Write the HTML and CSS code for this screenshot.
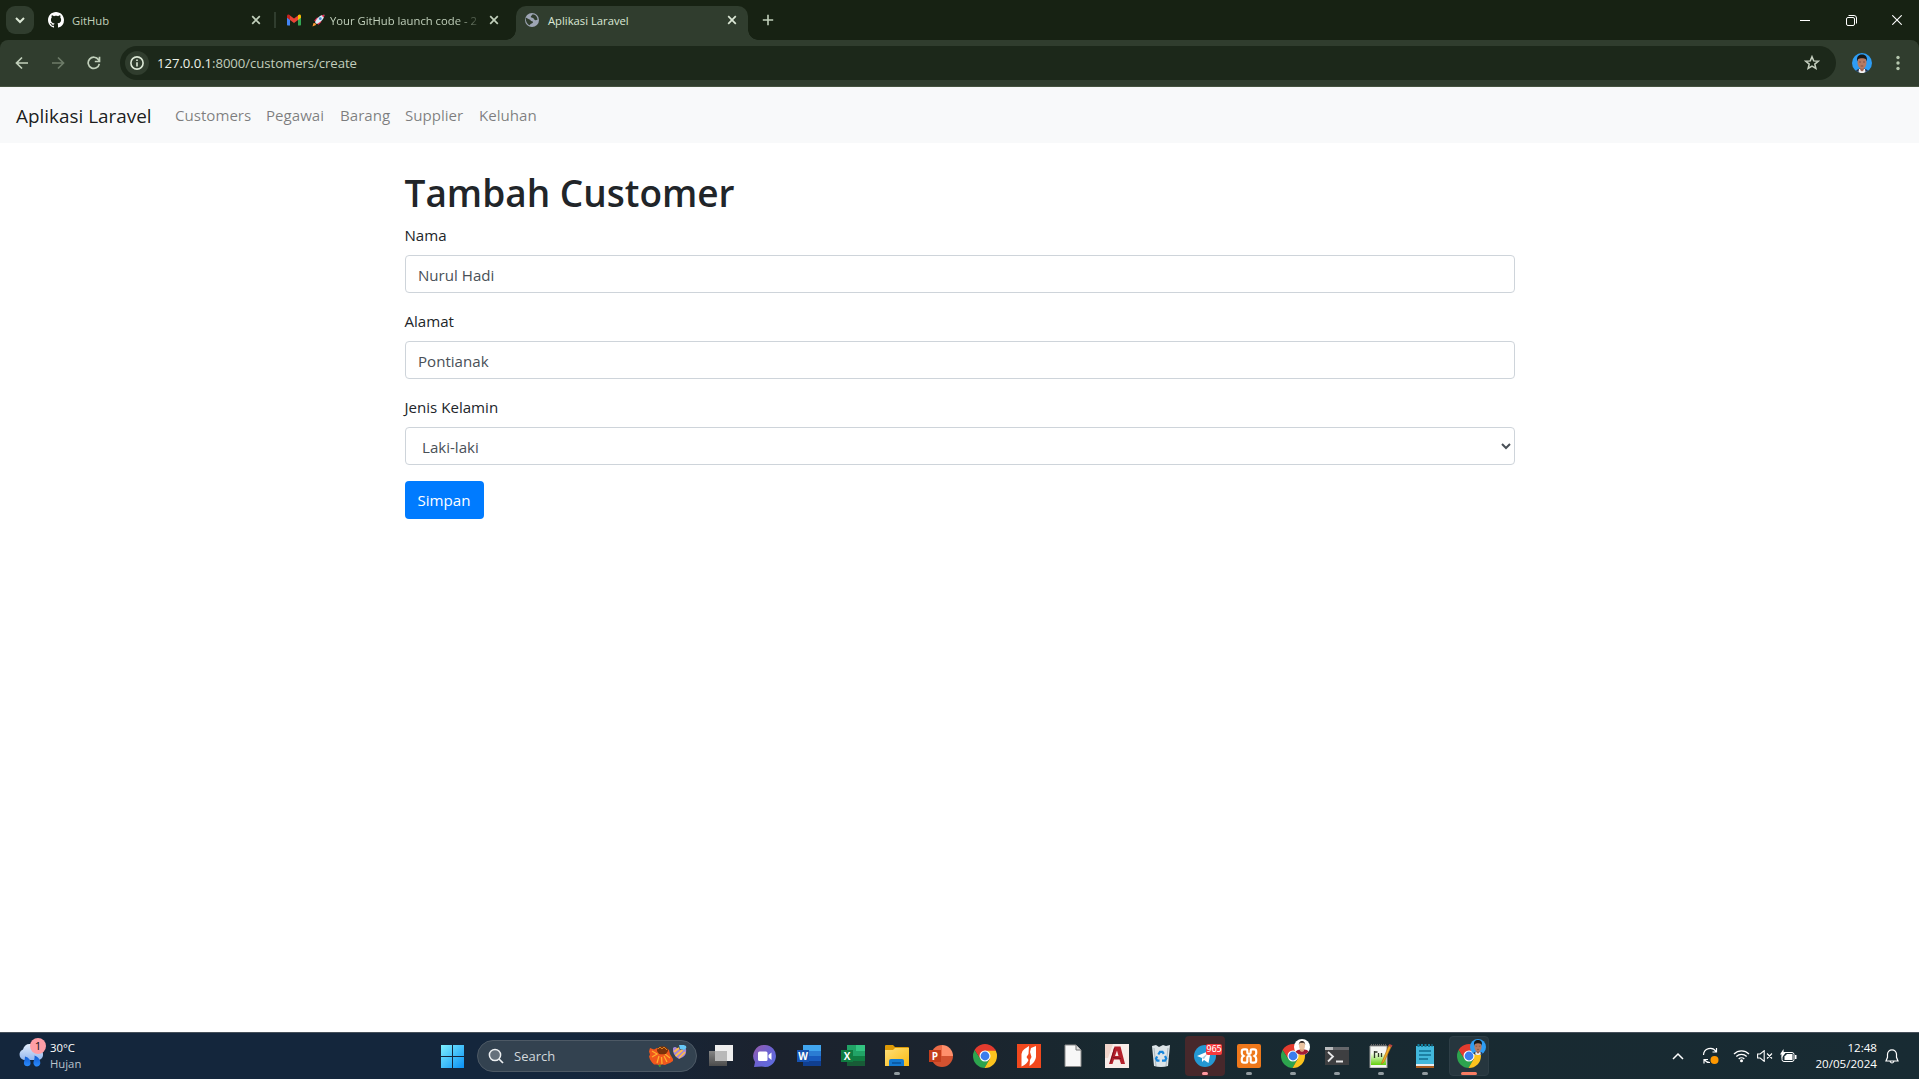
FILE: index.html
```html
<!DOCTYPE html>
<html lang="id">
<head>
<meta charset="utf-8">
<title>Aplikasi Laravel</title>
<link rel="stylesheet" href="styles.css">
</head>
<body>
<svg class="defs" width="0" height="0" aria-hidden="true">
  <defs>
    <linearGradient id="win" x1="0" y1="0" x2="1" y2="1"><stop offset="0" stop-color="#7df0ff"/><stop offset="1" stop-color="#0a90f5"/></linearGradient>
    <linearGradient id="cloud" x1="0" y1="0" x2="0" y2="1"><stop offset="0" stop-color="#e3edfb"/><stop offset="1" stop-color="#94b7ee"/></linearGradient>
    <linearGradient id="drop" x1="0" y1="0" x2="0" y2="1"><stop offset="0" stop-color="#1259d0"/><stop offset="1" stop-color="#2a8cff"/></linearGradient>
    <linearGradient id="chat" x1="0" y1="0" x2="1" y2="1"><stop offset="0" stop-color="#9a5aa8"/><stop offset=".5" stop-color="#6b62d2"/><stop offset="1" stop-color="#5b6fe0"/></linearGradient>
    <linearGradient id="folder" x1="0" y1="0" x2="1" y2="1"><stop offset="0" stop-color="#ffe07a"/><stop offset="1" stop-color="#fbb910"/></linearGradient>
    <linearGradient id="npp" x1="0" y1="0" x2="0" y2="1"><stop offset="0" stop-color="#f8fff0"/><stop offset="1" stop-color="#63d00c"/></linearGradient>
    <linearGradient id="grey" x1="0" y1="0" x2="0" y2="1"><stop offset="0" stop-color="#858585"/><stop offset="1" stop-color="#4c4c4c"/></linearGradient>
    <clipPath id="round"><circle cx="12" cy="12" r="12"/></clipPath>
    <symbol id="chrome" viewBox="0 0 24 24">
      <g clip-path="url(#round)">
        <path fill="#e33b2e" d="M0 0h24v7H12L7 14.500 1.600 6z"/>
        <path fill="#2da44e" d="M1.600 6 7.200 14.800l4.800 2.500 4-.8L11.500 24H0V6z"/>
        <path fill="#fcc31e" d="M12 6.700h12V24H11.500l5.200-9z"/>
      </g>
      <circle cx="12" cy="12" r="5.500" fill="#fff"/><circle cx="12" cy="12" r="4.400" fill="#3b7ded"/>
    </symbol>
    <symbol id="close" viewBox="0 0 10 10"><path d="M1.200 1.200l7.600 7.600M8.800 1.200L1.200 8.800" fill="none" stroke="currentColor" stroke-width="1.700"/></symbol>
    <symbol id="person" viewBox="0 0 20 20">
      <circle cx="10" cy="10" r="10" fill="#2e9df4"/>
      <path d="M4 17.800C5 16 7.500 15.500 10 15.500s5 .5 6 2.300A10 10 0 0 1 10 20a10 10 0 0 1-6-2.200z" fill="#26304a"/>
      <path d="M7 16h6l.5 3-2 1h-3l-2-1z" fill="#f4f2f2"/>
      <path d="M8.200 13h3.600v4L10 18.500 8.200 17z" fill="#9a6250"/>
      <ellipse cx="10" cy="9.500" rx="4.500" ry="6.300" fill="#b67a62"/>
      <path d="M5.200 8.500C4.300 3.500 6.500 1.400 10 1.400s5.700 2.100 4.800 7.100L14 6.200C12 5 8 5 6 6.200z" fill="#171717"/>
      <path d="M7 9h2M11 9h2M8.700 13h2.600" stroke="#6a4236" stroke-width=".7"/>
    </symbol>
  </defs>
</svg>

<header class="browser">
  <div class="tabstrip">
    <button class="tab-search" aria-label="Search tabs"><svg width="10" height="7" viewBox="0 0 10 7"><path d="M1 1l4 4 4-4" fill="none" stroke="currentColor" stroke-width="2"/></svg></button>
    <div class="tab tab-github">
      <svg class="favicon" width="16" height="16" viewBox="0 0 16 16"><path fill="#fff" d="M8 0C3.580 0 0 3.580 0 8c0 3.540 2.290 6.530 5.470 7.590.4.070.55-.17.55-.38 0-.19-.01-.82-.01-1.490-2.010.37-2.530-.49-2.690-.94-.09-.23-.48-.94-.82-1.130-.28-.15-.68-.52-.01-.53.63-.01 1.080.58 1.230.82.72 1.210 1.870.87 2.330.66.070-.52.28-.87.51-1.070-1.780-.2-3.640-.89-3.640-3.950 0-.87.31-1.590.82-2.150-.08-.2-.36-1.020.08-2.120 0 0 .67-.21 2.200.82.64-.18 1.320-.27 2-.27s1.360.09 2 .27c1.530-1.040 2.200-.82 2.200-.82.44 1.100.16 1.920.08 2.120.51.56.82 1.270.82 2.150 0 3.070-1.870 3.750-3.650 3.950.29.25.54.73.54 1.480 0 1.070-.01 1.930-.01 2.200 0 .21.15.46.55.38A8.010 8.010 0 0 0 16 8c0-4.420-3.580-8-8-8z"/></svg>
      <span class="tab-title">GitHub</span>
      <svg class="tab-close" width="10" height="10"><use href="#close"/></svg>
    </div>
    <div class="tab tab-mail">
      <svg class="favicon" width="16" height="16" viewBox="0 0 16 16"><path fill="#4285f4" d="M1 5v7.500c0 .6.400 1 1 1h2V7z"/><path fill="#34a853" d="M15 5v7.500c0 .6-.4 1-1 1h-2V7z"/><path fill="#ea4335" d="M4 3.600l4 3 4-3V8l-4 3-4-3z"/><path fill="#c5221f" d="M1 4.200C1 2.500 2.700 2 4 3.300V8L1 5.800z"/><path fill="#fbbc04" d="M15 4.200c0-1.700-1.700-2.200-3-.9V8l3-2.200z"/></svg>
      <svg class="rocket" width="13" height="13" viewBox="0 0 13 13"><path d="M2.200 6.500L5 3.600l2.500.7-3.700 4zM6.500 10.800l2.900-2.800-.6-2.500-3.900 3.800z" fill="#e4264e"/><path d="M3 8.300C5 4 8 .7 12.300.7c0 4.300-3.400 7.300-7.600 9.300z" fill="#dcebf4"/><path d="M9.500 1.400c.9-.5 1.800-.7 2.800-.7 0 1-.2 2-.6 2.900z" fill="#e4264e"/><circle cx="8.300" cy="4.700" r="1.400" fill="#438bd0"/><path d="M.5 12.500l1-3.500 2 .2.500 1.900z" fill="#ff9c32"/></svg>
      <span class="tab-title fade">Your GitHub launch code - 2</span>
      <svg class="tab-close" width="10" height="10"><use href="#close"/></svg>
    </div>
    <div class="tab tab-active">
      <svg class="favicon" width="14" height="14" viewBox="0 0 14 14"><circle cx="7" cy="7" r="7" fill="#9da5b4"/><path d="M.8 4.700C2 5 3 6 4.500 6.500c1.200.3 1 1.500 2.500 1.700 1.200.2 1.300 1 .5 1.800-.8.800-2.500.7-2.800 2.300C2.500 11.500.5 8.500.8 4.700zM7.500 1.300C7.500 2.500 5.800 2.500 5.800 3.700S7 4.500 8 5c1.200.6 1 2 2.300 2.200.8.100 1.400-.4 2.200-.4C12.500 4 10.500 1.500 7.500 1.300z" fill="#303d2e"/></svg>
      <span class="tab-title">Aplikasi Laravel</span>
      <svg class="tab-close" width="10" height="10"><use href="#close"/></svg>
    </div>
    <button class="new-tab" aria-label="New tab"><svg width="12" height="12" viewBox="0 0 12 12"><path d="M6 .8v10.400M.8 6h10.400" stroke="currentColor" stroke-width="1.600"/></svg></button>
    <div class="window-controls">
      <span><svg width="10" height="10"><path d="M0 5.500h10" stroke="#fff"/></svg></span>
      <span><svg width="11" height="11" viewBox="0 0 11 11" fill="none" stroke="#fff"><rect x=".5" y="2.500" width="8" height="8" rx="1.500"/><path d="M2.500.5H8A2.500 2.500 0 0 1 10.500 3v5.500"/></svg></span>
      <span><svg width="10" height="10" viewBox="0 0 10 10"><path d="M.3.3l9.400 9.400M9.700.3L.3 9.700" stroke="#fff" stroke-width="1.100"/></svg></span>
    </div>
  </div>
  <div class="toolbar">
    <span class="nav-icon"><svg width="14" height="14" viewBox="0 0 14 14" fill="none" stroke="currentColor" stroke-width="1.700"><path d="M13 7H2M7 1.500L1.500 7 7 12.500"/></svg></span>
    <span class="nav-icon disabled"><svg width="14" height="14" viewBox="0 0 14 14" fill="none" stroke="currentColor" stroke-width="1.700"><path d="M1 7h11M7 1.500L12.500 7 7 12.500"/></svg></span>
    <span class="nav-icon"><svg width="14" height="14" viewBox="0 0 14 14" fill="none" stroke="currentColor" stroke-width="1.700"><path d="M12.300 7.800A5.600 5.600 0 1 1 11.500 3.800L12.500 5M12.500.8V5.500H7.800"/></svg></span>
    <div class="omnibox">
      <span class="site-info"><svg width="14" height="14" viewBox="0 0 14 14"><circle cx="7" cy="7" r="6.100" fill="none" stroke="currentColor" stroke-width="1.600"/><path d="M7 6.200v4.200M7 3.500v1.600" stroke="currentColor" stroke-width="1.600"/></svg></span>
      <span class="url"><b>127.0.0.1</b>:8000/customers/create</span>
      <svg class="star" width="16" height="16" viewBox="0 0 16 16"><path d="M8 1.700l1.700 4.200 4.500.3-3.400 2.900 1.100 4.400L8 11.100l-3.900 2.400 1.100-4.400L1.800 6.200l4.500-.3z" fill="none" stroke="currentColor" stroke-width="1.500"/></svg>
    </div>
    <svg class="avatar" width="20" height="20"><use href="#person"/></svg>
    <svg class="kebab" width="4" height="16" viewBox="0 0 4 16" fill="currentColor"><circle cx="2" cy="2.500" r="1.700"/><circle cx="2" cy="8" r="1.700"/><circle cx="2" cy="13.500" r="1.700"/></svg>
  </div>
</header>

<nav class="navbar">
  <a class="brand">Aplikasi Laravel</a>
  <ul class="menu"><li class="m-customers">Customers</li><li class="m-pegawai">Pegawai</li><li class="m-barang">Barang</li><li class="m-supplier">Supplier</li><li>Keluhan</li></ul>
</nav>

<main class="container">
  <h1>Tambah Customer</h1>
  <form>
    <div class="form-group"><label for="nama">Nama</label><input class="form-control" id="nama" value="Nurul Hadi"></div>
    <div class="form-group"><label for="alamat">Alamat</label><input class="form-control" id="alamat" value="Pontianak"></div>
    <div class="form-group"><label for="jk">Jenis Kelamin</label><select class="form-control" id="jk"><option>Laki-laki</option></select></div>
    <button class="btn" type="button">Simpan</button>
  </form>
</main>

<footer class="taskbar">
  <div class="weather">
    <svg width="28" height="30" viewBox="0 0 28 30"><path d="M6 22a5.500 5.500 0 0 1-1-10.500C6 7 10 5 14 6.500c4-1 8 1 9 5.500 3 2 3 9-2 10z" fill="url(#cloud)"/><path d="M7 18.500c4 1 6 4 5.500 7.500-1 3-5.500 3-6.500 0-.5-2.500 1-4 1-7.500zM16.500 17.500c4.500 1.500 6 5 5.800 8-.8 4-5.500 4-6.700.5-.6-3 1.400-4.500.9-8.500z" fill="url(#drop)"/><circle cx="20" cy="8" r="8" fill="#ff9ea6"/><text x="20" y="12" text-anchor="middle" class="badge-text">1</text></svg>
    <div class="weather-text"><span>30°C</span><span class="muted">Hujan</span></div>
  </div>
  <span class="start"><svg width="23" height="23" viewBox="0 0 23 23"><path fill="url(#win)" d="M0 0h11v11H0zM12 0h11v11H12zM0 12h11v11H0zM12 12h11v11H12z"/></svg></span>
  <div class="search">
    <svg width="16" height="16" viewBox="0 0 16 16"><circle cx="7" cy="7" r="5.600" fill="#66717c" stroke="#eceff1" stroke-width="1.500"/><path d="M11 11l4 4" stroke="#eceff1" stroke-width="1.700"/></svg>
    <span>Search</span>
    <svg class="flowers" width="38" height="22" viewBox="0 0 38 22"><path d="M1 3l4 1.500L8 3h9l3 2 1 4 3 5 0 2-3 2-3 1-2 1-3-.5-2 1-3-1-3 0-2-2-2-3-1-3 1-2-1-3z" fill="#f0571d"/><path d="M3 6l5 3-5 3M8 18l2-7M13 19l-.5-7M18 17l-3-6M21 13l-5-4" stroke="#ffae2c" stroke-width="1.300" fill="none"/><path d="M10 20.500l1-1v2.500z" fill="#3e9a34" stroke="#3e9a34"/><ellipse cx="13.500" cy="5.300" rx="5.500" ry="4" fill="#79320b"/><path d="M9 4l2-2 2 2 2-2 3 3" stroke="#d7801c" fill="none"/><path d="M24 3q2-2 4 0l4 2 5-1q1 5-3 8l-4 2q-7-4-6-11z" fill="#a886d5"/><path d="M30 0q4-1 7 1 1 3-2 4l-4-1z" fill="#67c8f7"/><path d="M25 7l5-4M26.500 11l7-6M30 13l6-6" stroke="#ffbf45" stroke-width="1.700"/></svg>
  </div>
  <div class="apps">
    <span class="app"><svg width="24" height="24" viewBox="0 0 24 24"><path fill="url(#grey)" d="M0 7h18v15H0z"/><path fill="#eee" d="M6 1h18v16H6z"/><path fill="#b9b9b9" d="M6 7h12v10H6z"/></svg></span>
    <span class="app"><svg width="24" height="24" viewBox="0 0 24 24"><path d="M12 1a11 11 0 1 1-3 21.600L1 23l1-5A11 11 0 0 1 12 1z" fill="url(#chat)"/><rect x="5" y="7.500" width="9.500" height="9.500" rx="1.500" fill="#fff"/><path d="M15.500 11l3-2.500v7.500l-3-2.500z" fill="#fff"/></svg></span>
    <span class="app"><svg width="24" height="24" viewBox="0 0 24 24"><path fill="#41a5ee" d="M6 1h18v6H6z"/><path fill="#2b7cd3" d="M6 7h18v5H6z"/><path fill="#185abd" d="M6 12h18v5H6z"/><path fill="#103f91" d="M6 17h18v5H6z"/><path fill="#1752b0" d="M0 6h12v12H0z"/><text x="6" y="15.600" text-anchor="middle" class="office">W</text></svg></span>
    <span class="app"><svg width="24" height="24" viewBox="0 0 24 24"><path fill="#21a366" d="M6 1h18v11H6z"/><path fill="#33c481" d="M15 1h9v6h-9z"/><path fill="#107c41" d="M6 12h18v5H6z"/><path fill="#185c37" d="M6 17h18v5H6z"/><path fill="#107c41" d="M0 6h12v12H0z"/><text x="6" y="15.600" text-anchor="middle" class="office">X</text></svg></span>
    <span class="app open"><svg width="24" height="24" viewBox="0 0 24 24"><path fill="#dd9a06" d="M0 2q0-1 1-1h7l2 2h13q1 0 1 1v6H0z"/><path fill="url(#folder)" d="M0 6h8l2-2h14v18H0z"/><path fill="#147ad0" d="M4 17q0-2 2-2h11q2 0 2 2v5H4z"/><path fill="#0b5ba6" d="M7 18h9v2H7z"/></svg></span>
    <span class="app"><svg width="24" height="24" viewBox="0 0 24 24"><path fill="#ed6c47" d="M13 1v11H2A11 11 0 0 1 13 1z"/><path fill="#ff8f6b" d="M13 1a11 11 0 0 1 11 11H13z"/><path fill="#d35230" d="M2 12h22a11 11 0 0 1-22 0z"/><path fill="#c43e1c" d="M0 6h12v12H0z"/><text x="6" y="15.600" text-anchor="middle" class="office">P</text></svg></span>
    <span class="app"><svg width="24" height="24"><use href="#chrome"/></svg></span>
    <span class="app"><svg width="24" height="24" viewBox="0 0 24 24"><path fill="#f1481d" d="M0 0h24v24H0z"/><path d="M4.500 19V10q0-3 3-5l4.500-3-.5 8-2 3 2 3q-1.500 4-7 6.500zM13 8l1-4 5-2v11q-.5 5-6.500 9l.5-6 1.500-3z" fill="#fff"/></svg></span>
    <span class="app"><svg width="24" height="24" viewBox="0 0 24 24"><path d="M4 1h11l5 5v16.500H4z" fill="#f7f7f7" stroke="#8c8c8c"/><path d="M15 1v5h5" fill="#ddd" stroke="#777"/></svg></span>
    <span class="app"><svg width="24" height="24" viewBox="0 0 24 24"><path fill="#f8ece8" d="M0 0h24v24H0z"/><path fill="#f0d4ca" d="M0 0h8L3 14H0z"/><path fill="#b41f2a" fill-rule="evenodd" d="M4 20L9.500 2.500h6L20 20h-4l-1.500-4.500H9L7.500 20zM10 12h3.500L12 6.500z"/><path d="M8 13.500l8 1M9.500 4L5.500 18.500" stroke="#7e111d"/></svg></span>
    <span class="app"><svg width="24" height="24" viewBox="0 0 24 24"><path fill="#dce4e8" d="M3 2l4-1 3 2 4-2 3 1 4-1-2 21q-7 2-14 0z"/><path d="M5 4l2 18M19 4l-2 18" stroke="#aab7be"/><path d="M9.300 10.500l1.700-2.700h2.500l1.300 2M16 12l1.200 2.500-1.200 2.200h-3M10.500 16.700H8.200L7 14.500l1.200-2" fill="none" stroke="#1686dc" stroke-width="2.200"/></svg></span>
    <span class="app alert"><svg width="24" height="24" viewBox="0 0 24 24"><circle cx="12" cy="12" r="11" fill="#2498d3"/><path d="M4 12l14-6-2.500 13-4.500-3-2 2v-4z" fill="#fff"/><path d="M9 14l6-5-4 6" fill="#a9cce2"/></svg><span class="count">965</span></span>
    <span class="app open"><svg width="24" height="24" viewBox="0 0 24 24"><rect width="24" height="24" rx="2" fill="#ee781b"/><path d="M10.300 8.200V6.500q0-1.200-1.200-1.200H7q-2.200 0-2.200 2.200v1.700q0 1.700 1.700 2.800Q4.800 13.100 4.800 14.800v1.700q0 2.200 2.200 2.200h2.100q1.200 0 1.200-1.200V14q0-2 1.700-2h0q1.700 0 1.700 2v3.500q0 1.200 1.200 1.200H17q2.200 0 2.200-2.200v-1.700q0-1.700-1.700-2.800 1.700-1.100 1.700-2.800V7.500q0-2.200-2.200-2.200h-2.100q-1.200 0-1.200 1.200v1.700q0 1.600-1.700 1.600t-1.700-1.600z" fill="none" stroke="#fff" stroke-width="2.200"/></svg></span>
    <span class="app open"><svg width="24" height="24"><use href="#chrome"/></svg><svg class="profile" width="16" height="16" viewBox="0 0 16 16"><circle cx="8" cy="8" r="8" fill="#fff"/><path d="M1.500 12.500q2-2 5-2h4q3 0 4 2a8 8 0 0 1-13 0z" fill="#a41d33"/><path d="M6 9h4v3l-2 1-2-1z" fill="#dca17c"/><ellipse cx="8" cy="6.500" rx="3" ry="4.300" fill="#ebc3a0"/><path d="M4.800 6C4.300.5 11.700.5 11.200 6L10.300 3.800H5.700z" fill="#211a1a"/></svg></span>
    <span class="app open"><svg width="24" height="24" viewBox="0 0 24 24"><path d="M0 3h24v18H0z" fill="#3e3f41"/><path d="M0 3h24v3H0z" fill="#65676b"/><path d="M0 3h8v3H0z" fill="#b9bbbd"/><path d="M3 8l5 4.500-5 5M11 17.500h7" fill="none" stroke="#e8e8e8" stroke-width="1.800"/></svg></span>
    <span class="app open"><svg width="24" height="24" viewBox="0 0 24 24"><path d="M1 2h17v22H1z" fill="#f5f6f2" stroke="#999"/><path d="M2 9h15v12H2z" fill="url(#npp)"/><path d="M2 1h15" stroke="#666" stroke-width="2" stroke-dasharray="1 1"/><path d="M5.500 7v7M5.500 8h3M9.500 9v4M12.500 9v4" stroke="#30372a" stroke-width="1.300"/><path d="M13 18L20 1l2.500 1L15 18l-2.500 2z" fill="#f2ae26" stroke="#ad6519" stroke-width=".6"/><path d="M19.500 2l1-2 3 1.300-1 2z" fill="#b4443f"/></svg></span>
    <span class="app open"><svg width="24" height="24" viewBox="0 0 24 24"><path fill="#42b8dc" d="M3 2h18v21H3z"/><path fill="#e8edf0" d="M3 20h18v2H3z"/><path fill="#ac5c1e" d="M3 22h18v2H3z"/><path d="M4.500 1.500h15" stroke="#147f9e" stroke-width="3" stroke-dasharray="2 1.500"/><path d="M6 7h12M6 11h12M6 15h9" stroke="#126e91" stroke-width="1.400"/></svg></span>
    <span class="app current"><svg width="24" height="24"><use href="#chrome"/></svg><svg class="profile" width="16" height="16"><use href="#person"/></svg></span>
  </div>
  <div class="tray">
    <span class="slot wide"><svg width="12" height="8" viewBox="0 0 12 8"><path d="M1 7l5-5 5 5" fill="none" stroke="#fff" stroke-width="1.500"/></svg></span>
    <span class="slot sync"><svg width="18" height="18" viewBox="0 0 18 18" fill="none" stroke="#fff" stroke-width="1.200"><path d="M1.500 8A6.800 6.800 0 0 1 14 4.500M14.500 1v4h-4M2 16.500v-4h4M2.500 13A7 7 0 0 0 8 15.500"/><circle cx="12.500" cy="13" r="4" fill="#ff9800" stroke="none"/></svg></span>
    <span class="slot"><svg width="17" height="14" viewBox="0 0 17 14" fill="none" stroke="#fff" stroke-width="1.300"><path d="M1 5a10.500 10.500 0 0 1 15 0M3.300 7.500a7.300 7.300 0 0 1 10.400 0M5.700 10a4 4 0 0 1 5.600 0"/><circle cx="8.500" cy="11.700" r="1.500" fill="#fff" stroke="none"/></svg></span>
    <span class="slot vol"><svg width="16" height="12" viewBox="0 0 16 12" fill="none" stroke="#fff" stroke-width="1.100"><path d="M.6 4v4h2.600l4 3.300V.7l-4 3.300zM10 3.500l5 5M15 3.500l-5 5"/></svg></span>
    <span class="slot"><svg width="17" height="14" viewBox="0 0 17 14"><rect x="2" y="3.500" width="12" height="9" rx="2" fill="none" stroke="#fff"/><path d="M4.500 7.500L7 5h5.500v6h-8z" fill="#fff"/><path d="M15 6h1.500v4H15zM3.500 0L0 5.500h2L1.500 9l4-5H3.700z" fill="#fff"/></svg></span>
    <div class="clock"><span>12:48</span><span>20/05/2024</span></div>
    <span class="bell"><svg width="14" height="15" viewBox="0 0 14 15" fill="none" stroke="#fff" stroke-width="1.200"><path d="M7 .8a4.500 4.500 0 0 0-4.500 4.500v3L1 12h12l-1.500-3.700v-3A4.500 4.500 0 0 0 7 .8zM5 12.500q2 3 4 0"/></svg></span>
  </div>
</footer>
</body>
</html>
```
FILE: styles.css
```css
* { box-sizing: border-box; }
body {
  margin: 0;
  height: 100vh;
  display: flex;
  flex-direction: column;
  overflow: hidden;
  background: #fff;
  color: #212529;
  font: 370 15.100px/24px "Open Sans", "Noto Sans", sans-serif;
}
svg { display: block; flex: none; }
.defs { position: absolute; }
button { border: 0; padding: 0; font: inherit; }

/* Browser window */
.browser { height: 87px; flex: none; background: #172213; color: #c1d0bb; font-weight: 400; }
.tabstrip { height: 40px; display: flex; align-items: center; padding-left: 6px; font-size: 11.250px; }
.tab-search { width: 28px; height: 28px; border-radius: 9px; background: #303d2e; color: #dce8d6; display: flex; align-items: center; justify-content: center; }
.tab { display: flex; align-items: center; white-space: nowrap; }
.tab-title { flex: 1; line-height: 20px; padding-top: 1px; }
.favicon { margin-right: 8px; }
.tab-github { width: 242px; padding: 0 13px 0 14px; border-right: 2px solid #303d2e; height: 16px; }
.tab-mail { width: 240px; padding: 0 16px 0 10px; }
.tab-mail .rocket { margin-left: 2px; margin-right: 5px; }
.tab-mail .tab-title { flex: 0 0 148px; margin-right: 11px; }
.fade { mask-image: linear-gradient(to right, #000 85%, transparent 104%); }
.tab-active { position: relative; width: 232px; height: 34px; align-self: flex-end; padding: 0 11px 6px 9px; background: #303d2e; border-radius: 10px 10px 0 0; color: #dce8d6; }
.tab-active .favicon { margin-right: 9px; }
.tab-active::before, .tab-active::after { content: ""; position: absolute; bottom: 0; width: 10px; height: 10px; }
.tab-active::before { left: -10px; background: radial-gradient(circle at 0 0, transparent 9.500px, #303d2e 10px); }
.tab-active::after { right: -10px; background: radial-gradient(circle at 100% 0, transparent 9.500px, #303d2e 10px); }
.new-tab { margin-left: 14px; background: none; color: #c1d0bb; }
.window-controls { margin-left: auto; margin-right: -1px; display: flex; }
.window-controls span { width: 46px; height: 40px; display: flex; align-items: center; justify-content: center; }
.toolbar { height: 47px; padding: 0 19px 1px 4px; display: flex; align-items: center; background: #303d2e; border-bottom: 1px solid #45523f; border-radius: 8px 8px 0 0; }
.nav-icon { width: 36px; display: flex; justify-content: center; color: #c1d0bb; }
.nav-icon.disabled { color: #6d7b68; }
.omnibox { flex: 1; height: 34px; margin: 0 16px 0 8px; padding: 0 16px 0 5px; display: flex; align-items: center; background: #1c281a; border-radius: 17px; }
.site-info { width: 24px; height: 24px; border-radius: 50%; background: #303d2e; color: #dce8d6; display: flex; align-items: center; justify-content: center; }
.url { margin-left: 8px; font-size: 13.200px; letter-spacing: -.07px; color: #c1cdbc; }
.url b { font-weight: 400; color: #edf3e9; }
.star { margin-left: auto; color: #c6d0c0; }
.avatar { margin-right: 24px; }
.kebab { color: #b5c7ae; }

/* Site navigation */
.navbar { height: 56px; flex: none; padding: 0 16px; display: flex; align-items: center; background: #f8f9fa; }
.brand { width: 159px; font-size: 18.900px; line-height: 30px; padding-top: 1px; color: rgba(0,0,0,.9); white-space: nowrap; }
.menu { display: flex; margin: 0; padding: 0; list-style: none; color: rgba(0,0,0,.5); }
.m-customers { width: 91px; }
.m-pegawai { width: 74px; }
.m-barang { width: 65px; }
.m-supplier { width: 74px; }

/* Customer form */
.container { flex: 1; width: 1140px; margin: 0 auto; padding: 24px 15px; }
h1 { margin: 0 0 6px; padding-top: 2px; font-size: 37px; font-weight: 600; line-height: 48px; }
.form-group { margin-bottom: 16px; }
label { display: block; margin-bottom: 8px; }
.form-control { display: block; width: 100%; height: 38px; padding: 7px 12px 5px 12.500px; border: 1px solid #ced4da; border-radius: 4px; background: #fff; color: #495057; font: inherit; outline: 0; }
select.form-control { padding-right: 1px; }
.btn { width: 79px; height: 38px; background: #007bff; color: #fff; border-radius: 4px; font-weight: 400; }

/* Taskbar */
.taskbar { height: 47px; flex: none; display: flex; align-items: center; padding-right: 16px; border-top: 1px solid #46505b; background: linear-gradient(to right, #14263c 0, #14263c 30%, #1b222e 40%, #1b242e 50%, #182930 58%, #182b33 100%); color: #fff; font-size: 11.300px; font-weight: 400; line-height: 16px; }
.weather { width: 430px; display: flex; align-items: center; padding-left: 18px; }
.weather svg { margin-top: -6px; }
.weather-text { margin-left: 4px; display: flex; flex-direction: column; }
.muted { color: #bbc4cc; }
.badge-text { font: 11.500px "Open Sans", sans-serif; fill: #111; }
.office { font: 700 10px "Open Sans", sans-serif; fill: #fff; }
.start { width: 44px; display: flex; justify-content: center; }
.search { width: 220px; height: 32px; margin: 0 2px 0 3px; padding: 0 9px 0 10px; display: flex; align-items: center; gap: 10px; border: 1px solid #4d5965; border-radius: 16px; background: #334250; color: #d2d8dc; font-size: 13px; }
.flowers { margin-left: auto; }
.apps { display: flex; gap: 4px; padding-left: 2px; }
.app { position: relative; width: 40px; height: 40px; display: flex; align-items: center; justify-content: center; border-radius: 4px; }
.open::after, .alert::after, .current::after { content: ""; position: absolute; left: 17px; bottom: 1px; width: 6px; height: 3px; border-radius: 2px; background: #929ba0; }
.alert { background: #47282b; }
.alert::after { background: #ff98a0; }
.current { background: #26363e; border: 1px solid #2e3e46; }
.current::after { left: 11px; bottom: 0; width: 16px; background: #f77c62; }
.count { position: absolute; left: 21px; top: 8px; width: 16px; height: 11px; border-radius: 2px; background: #f5393c; font: 9px/11px "DejaVu Sans Mono", monospace; letter-spacing: -.2px; text-align: center; }
.profile { position: absolute; right: 3px; top: 3px; }
.current .profile { right: 2px; top: 2px; }
.tray { margin-left: auto; display: flex; align-items: center; }
.slot { width: 24px; display: flex; justify-content: center; }
.slot.wide { width: 30px; }
.slot.sync { width: 36px; }
.slot.vol { width: 23px; }
.clock { width: 77px; display: flex; flex-direction: column; text-align: right; font-size: 11.600px; }
.bell { width: 26px; padding-left: 8px; }
```
